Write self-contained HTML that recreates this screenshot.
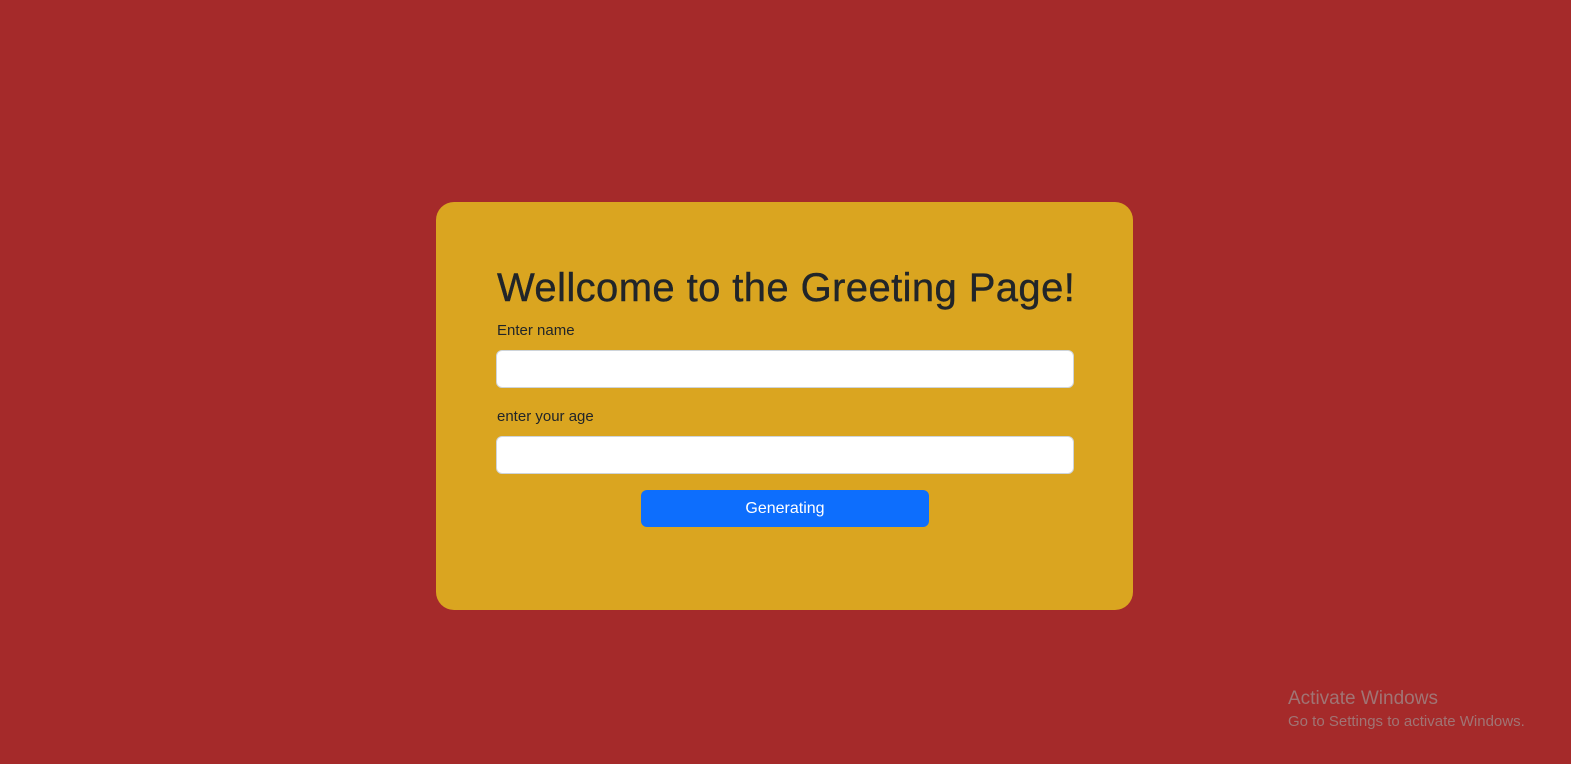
<!DOCTYPE html>
<html><head><meta charset="utf-8"><style>
html,body{margin:0;padding:0;width:1571px;height:764px;background:#a52a2a;overflow:hidden;font-family:"Liberation Sans",sans-serif;position:relative}
.card{position:absolute;left:436px;top:202px;width:697px;height:408px;background:#daa520;border-radius:18px}
h1{position:absolute;left:497px;top:266px;margin:0;font-size:40px;font-weight:normal;color:#212529;white-space:nowrap;letter-spacing:0.4px;-webkit-text-stroke:0.4px #212529}
.lbl{position:absolute;left:497px;font-size:15px;color:#212529}
.inp{position:absolute;left:496px;width:576px;height:36px;background:#fff;border:1px solid #ced4da;border-radius:6px}
.btn{position:absolute;left:641px;top:490px;width:288px;height:37px;background:#0d6efd;border-radius:6px;color:#fff;font-size:16px;text-align:center;line-height:37px}
.win{position:absolute;left:1288px;color:#a07474}
</style></head><body>
<div class="card"></div>
<h1>Wellcome to the Greeting Page!</h1>
<div class="lbl" style="top:322px">Enter name</div>
<div class="inp" style="top:350px"></div>
<div class="lbl" style="top:408px">enter your age</div>
<div class="inp" style="top:436px"></div>
<div class="btn">Generating</div>
<div class="win" style="top:688px;font-size:19px">Activate Windows</div>
<div class="win" style="top:713px;font-size:15px">Go to Settings to activate Windows.</div>
</body></html>
